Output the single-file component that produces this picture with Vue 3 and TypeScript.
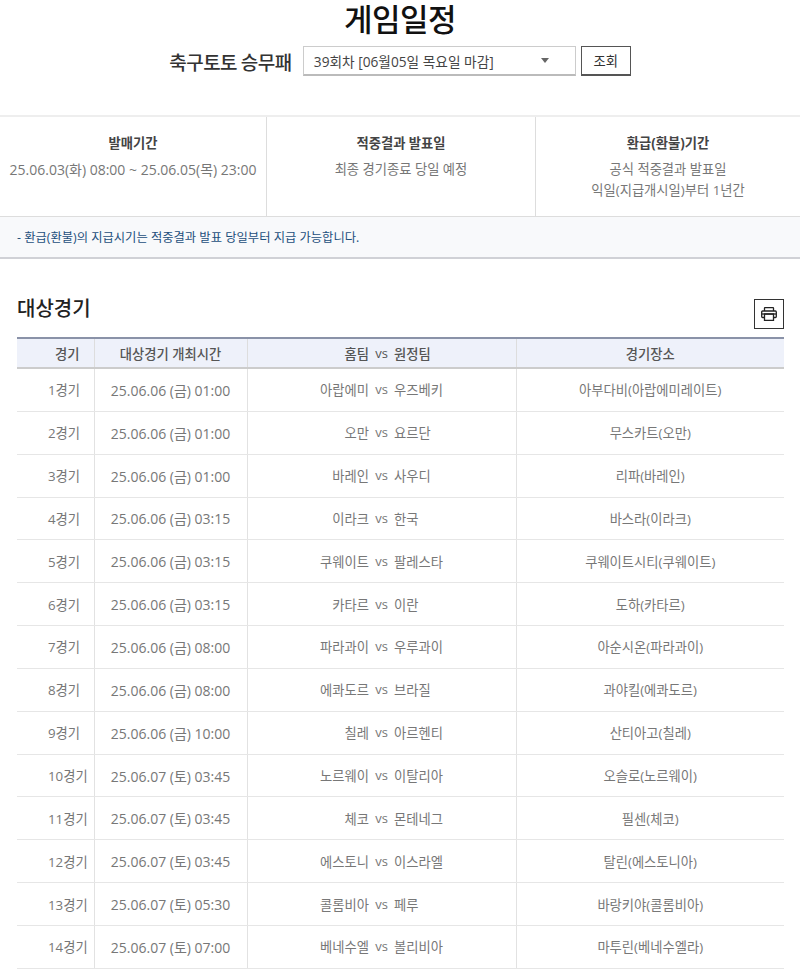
<script setup lang="ts">
interface Game { no: number; time: string; home: string; away: string; place: string }
const raw: [string, string, string, string][] = [
  ['25.06.06 (금) 01:00', '아랍에미', '우즈베키', '아부다비(아랍에미레이트)'],
  ['25.06.06 (금) 01:00', '오만', '요르단', '무스카트(오만)'],
  ['25.06.06 (금) 01:00', '바레인', '사우디', '리파(바레인)'],
  ['25.06.06 (금) 03:15', '이라크', '한국', '바스라(이라크)'],
  ['25.06.06 (금) 03:15', '쿠웨이트', '팔레스타', '쿠웨이트시티(쿠웨이트)'],
  ['25.06.06 (금) 03:15', '카타르', '이란', '도하(카타르)'],
  ['25.06.06 (금) 08:00', '파라과이', '우루과이', '아순시온(파라과이)'],
  ['25.06.06 (금) 08:00', '에콰도르', '브라질', '과야킬(에콰도르)'],
  ['25.06.06 (금) 10:00', '칠레', '아르헨티', '산티아고(칠레)'],
  ['25.06.07 (토) 03:45', '노르웨이', '이탈리아', '오슬로(노르웨이)'],
  ['25.06.07 (토) 03:45', '체코', '몬테네그', '필센(체코)'],
  ['25.06.07 (토) 03:45', '에스토니', '이스라엘', '탈린(에스토니아)'],
  ['25.06.07 (토) 05:30', '콜롬비아', '페루', '바랑키야(콜롬비아)'],
  ['25.06.07 (토) 07:00', '베네수엘', '볼리비아', '마투린(베네수엘라)'],
]
const games: Game[] = raw.map((r, i) => ({ no: i + 1, time: r[0], home: r[1], away: r[2], place: r[3] }))
</script>

<template>
  <div class="page">
    <h1 class="title">게임일정</h1>
    <div class="search">
      <span class="search-label">축구토토 승무패</span>
      <div class="select">
        <span>39회차 [06월05일 목요일 마감]</span>
        <i class="caret"></i>
      </div>
      <button class="go" type="button">조회</button>
    </div>

    <div class="info">
      <div class="info-cell">
        <strong>발매기간</strong>
        <p class="dates">25.06.03(화) 08:00 ~ 25.06.05(목) 23:00</p>
      </div>
      <div class="info-cell">
        <strong>적중결과 발표일</strong>
        <p>최종 경기종료 당일 예정</p>
      </div>
      <div class="info-cell">
        <strong>환급(환불)기간</strong>
        <p>공식 적중결과 발표일<br />익일(지급개시일)부터 1년간</p>
      </div>
    </div>
    <div class="notice">- 환급(환불)의 지급시기는 적중결과 발표 당일부터 지급 가능합니다.</div>

    <div class="section-head">
      <h2>대상경기</h2>
      <button class="print" type="button" aria-label="인쇄">
        <svg width="16" height="14" viewBox="0 0 16 14" fill="none" stroke="#222" stroke-width="1.3">
          <path d="M3.5 4V1.2a.6.6 0 0 1 .6-.6h7.8a.6.6 0 0 1 .6.6V4" />
          <path d="M3.5 10.5H1.6a.9.9 0 0 1-.9-.9V4.9A.9.9 0 0 1 1.6 4h12.8a.9.9 0 0 1 .9.9v4.7a.9.9 0 0 1-.9.9h-1.9" />
          <path d="M.7 7h14.6" />
          <path d="M3.5 7h9v6.3h-9z" />
        </svg>
      </button>
    </div>

    <table class="games">
      <colgroup>
        <col class="c1" /><col class="c2" /><col class="c3" /><col class="c4" />
      </colgroup>
      <thead>
        <tr>
          <th class="num-head">경기</th>
          <th>대상경기 개최시간</th>
          <th>
            <div class="versus"><span class="home">홈팀</span><span class="vs">vs</span><span class="away">원정팀</span></div>
          </th>
          <th>경기장소</th>
        </tr>
      </thead>
      <tbody>
        <tr v-for="g in games" :key="g.no">
          <td class="num">{{ g.no }}경기</td>
          <td class="time">{{ g.time }}</td>
          <td>
            <div class="versus"><span class="home">{{ g.home }}</span><span class="vs">vs</span><span class="away">{{ g.away }}</span></div>
          </td>
          <td>{{ g.place }}</td>
        </tr>
      </tbody>
    </table>
  </div>
</template>

<style>
html, body { margin: 0; background: #fff; }
</style>

<style scoped>
.page {
  width: 800px;
  height: 971px;
  overflow: hidden;
  font-family: "Open Sans", "Noto Sans CJK KR", sans-serif;
  color: #666;
  font-size: 13.3px;
}
.title {
  margin: 0;
  padding-top: 3px;
  line-height: 36px;
  text-align: center;
  font-family: "Liberation Sans", "Noto Sans CJK KR", sans-serif;
  font-size: 31px;
  font-weight: 500;
  color: #111;
  letter-spacing: -0.5px;
}
.search {
  margin-top: 7px;
  display: flex;
  justify-content: center;
  align-items: center;
  height: 30px;
}
.search-label {
  font-family: "Noto Sans CJK KR", sans-serif;
  font-size: 19px;
  font-weight: 500;
  color: #333;
  letter-spacing: -0.5px;
  margin-right: 11px;
}
.select {
  box-sizing: border-box;
  width: 273px;
  height: 30px;
  border: 1px solid #ccc;
  border-bottom: 2px solid #bbb;
  padding: 0 26px 0 10px;
  display: flex;
  align-items: center;
  justify-content: space-between;
  font-size: 13.7px;
  color: #444;
}
.caret {
  width: 0;
  height: 0;
  border-left: 4px solid transparent;
  border-right: 4px solid transparent;
  border-top: 5px solid #666;
}
.go {
  box-sizing: border-box;
  width: 50px;
  height: 30px;
  margin-left: 5px;
  padding: 0;
  background: #fff;
  border: 1px solid #555;
  border-bottom-width: 2px;
  font: inherit;
  font-size: 13.3px;
  color: #333;
}
.info {
  margin-top: 39px;
  display: grid;
  grid-template-columns: 266px 269px 1fr;
  height: 99px;
  border-top: 2px solid #eee;
  border-bottom: 1px solid #ddd;
}
.info-cell {
  padding-top: 16px;
  text-align: center;
  border-left: 1px solid #ddd;
}
.info-cell:first-child { border-left: 0; }
.info-cell strong {
  display: block;
  font-size: 13.3px;
  font-weight: 700;
  line-height: 20px;
  color: #444;
}
.info-cell p {
  margin: 6px 0 0;
  font-size: 13.3px;
  line-height: 21px;
  color: #777;
}
.info-cell p.dates { font-size: 14px; }
.notice {
  box-sizing: border-box;
  height: 42px;
  line-height: 42px;
  padding-left: 17px;
  background: #f8f9fb;
  border-bottom: 2px solid #d0d1d6;
  font-size: 12.3px;
  color: #1d4f7c;
}
.section-head {
  margin: 0 16px 0 17px;
  display: flex;
  justify-content: space-between;
  align-items: flex-end;
  height: 78px;
}
.section-head h2 {
  margin: 0 0 14px;
  font-family: "Noto Sans CJK KR", sans-serif;
  font-size: 20px;
  line-height: 30px;
  font-weight: 500;
  color: #222;
}
.print {
  box-sizing: border-box;
  width: 30px;
  height: 30px;
  margin-bottom: 8px;
  padding: 0;
  background: #fff;
  border: 1px solid #333;
  display: flex;
  align-items: center;
  justify-content: center;
}
.games {
  margin-left: 17px;
  width: 767px;
  border-collapse: collapse;
  table-layout: fixed;
  font-size: 13.3px;
}
.c1 { width: 77px; }
.c2 { width: 153px; }
.c3 { width: 269px; }
.c4 { width: 268px; }
.games th {
  height: 28px;
  padding: 0;
  background: #eef1fa;
  border-top: 2px solid #8a92a8;
  border-bottom: 2px solid #ccc;
  border-left: 1px solid #ddd;
  font-size: 13.3px;
  font-weight: 500;
  text-align: center;
  color: #555;
}
.games td {
  height: 41.85px;
  padding: 0;
  border-bottom: 1px solid #e6e6e6;
  border-left: 1px solid #e2e2e2;
  text-align: center;
  color: #777;
}
.games th:first-child, .games td:first-child { border-left: 0; }
.games .num-head {
  text-align: left;
  padding-left: 38px;
}
.games .num {
  text-align: left;
  padding-left: 31px;
}
.games .time { font-size: 14px; }
.versus {
  display: grid;
  grid-template-columns: 1fr 25px 1fr;
  text-align: center;
}
.home { text-align: right; }
.away { text-align: left; }
.vs { font-weight: 400; font-size: 13px; }
</style>
